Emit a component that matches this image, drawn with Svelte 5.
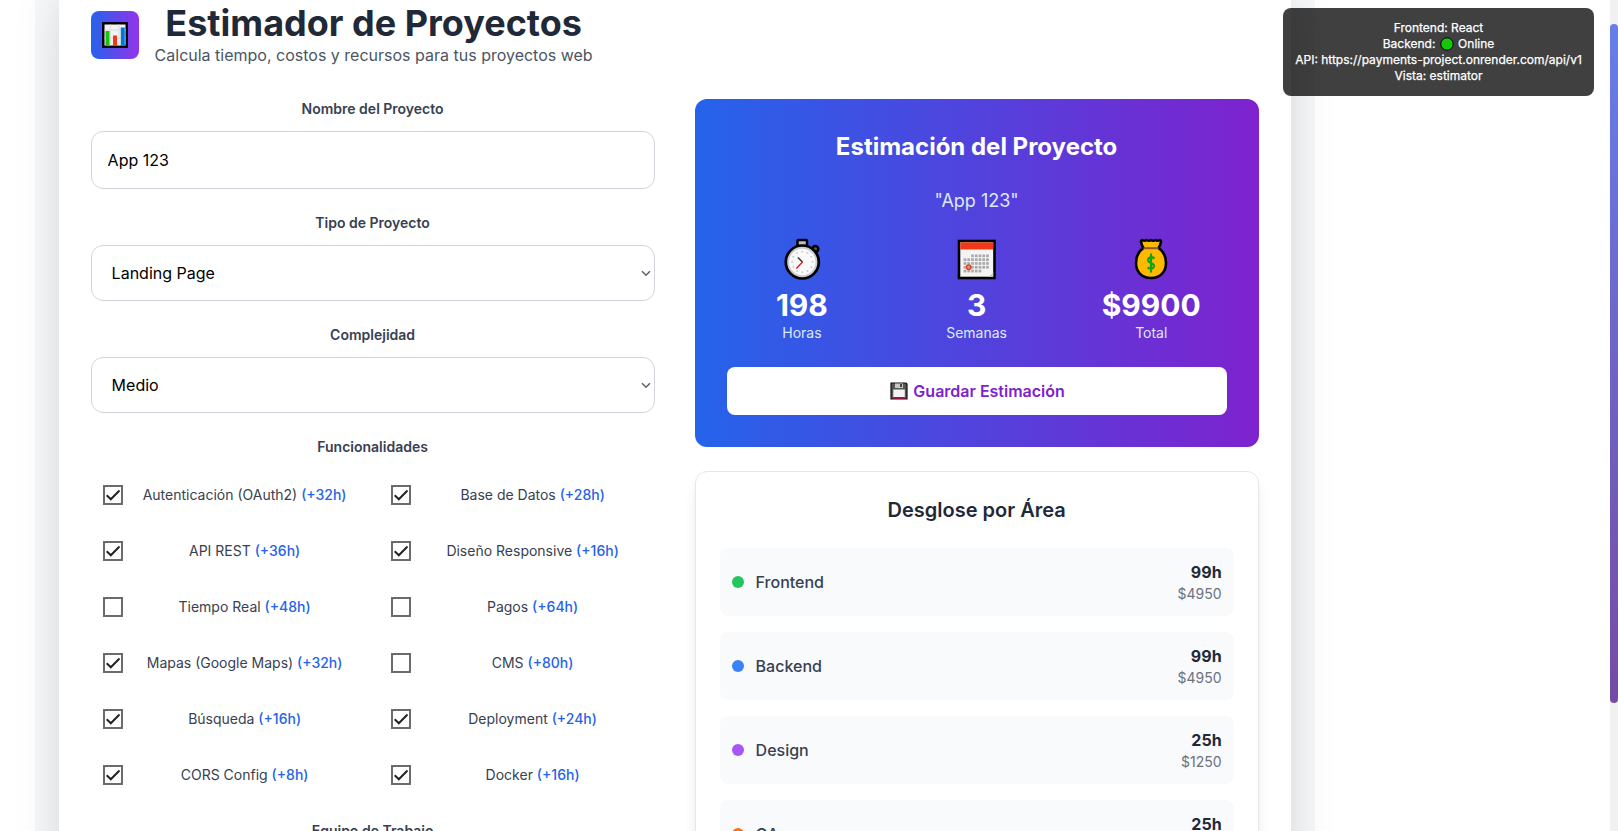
<script>
  const features = [
    ['Autenticación (OAuth2)', 32, true], ['Base de Datos', 28, true],
    ['API REST', 36, true], ['Diseño Responsive', 16, true],
    ['Tiempo Real', 48, false], ['Pagos', 64, false],
    ['Mapas (Google Maps)', 32, true], ['CMS', 80, false],
    ['Búsqueda', 16, true], ['Deployment', 24, true],
    ['CORS Config', 8, true], ['Docker', 16, true]
  ];
  const areas = [
    ['Frontend', '99h', '$4950', '#22c55e'],
    ['Backend', '99h', '$4950', '#3b82f6'],
    ['Design', '25h', '$1250', '#a855f7'],
    ['QA', '25h', '$1250', '#f97316']
  ];
  const dates = [];
  for (let r = 0; r < 5; r++)
    for (let c = 0; c < 7; c++)
      if (!(r === 0 && c < 2) && !(r === 4 && c > 4)) dates.push([6.6 + c * 3.75, 15 + r * 3.8]);
  const ticks = Array.from({ length: 12 }, (_, i) => [
    18 + 10.3 * Math.sin((i * Math.PI) / 6),
    23.5 - 10.3 * Math.cos((i * Math.PI) / 6)
  ]);
</script>

<div class="viewport">
  <div class="stage">
    <main class="sheet">
      <header>
        <div class="logo">
          <svg width="26" height="26" viewBox="0 0 26 26">
            <rect x="1.3" y="1.3" width="23.4" height="23.4" fill="#f3f3f3" stroke="#000" stroke-width="2.4" />
            <path d="M2.500 8H23.500M2.500 16H23.500M8.500 2.500V23.500M17 2.500V23.500" stroke="#dcdcdc" fill="none" />
            <rect x="3.500" y="9" width="4" height="14.500" fill="#16c60c" />
            <rect x="11" y="13.500" width="4" height="10" fill="#f03a17" />
            <rect x="18.800" y="5.500" width="4" height="18" fill="#0078d7" />
          </svg>
        </div>
        <div class="heading">
          <h1>Estimador de Proyectos</h1>
          <p>Calcula tiempo, costos y recursos para tus proyectos web</p>
        </div>
      </header>

      <div class="columns">
        <form>
          <div class="field">
            <label for="name">Nombre del Proyecto</label>
            <input id="name" class="control" value="App 123" />
          </div>
          {#each [['Tipo de Proyecto', 'Landing Page'], ['Complejidad', 'Medio']] as [label, value]}
            <div class="field">
              <span class="label">{label}</span>
              <div class="control select">
                <span>{value}</span>
                <svg width="10" height="7" viewBox="0 0 10 7"><path d="M1 1.200L5 5.200L9 1.200" fill="none" stroke="#666" stroke-width="1.600" /></svg>
              </div>
            </div>
          {/each}
          <div class="field">
            <span class="label">Funcionalidades</span>
            <div class="features">
              {#each features as [name, hours, on]}
                <div class="feature">
                  <svg class="box" width="20" height="20" viewBox="0 0 20 20">
                    <rect x="1" y="1" width="18" height="18" fill="#fff" stroke="#6b6b6b" stroke-width="2" />
                    {#if on}<path d="M3.700 10.300L7.800 14.300L16.500 5.500" fill="none" stroke="#222" stroke-width="2" />{/if}
                  </svg>
                  <span class="name">{name} <b>(+{hours}h)</b></span>
                </div>
              {/each}
            </div>
          </div>
          <div class="field"><span class="label">Equipo de Trabajo</span></div>
        </form>

        <div class="results">
          <section class="summary">
            <h2>Estimación del Proyecto</h2>
            <p class="project">"App 123"</p>
            <div class="stats">
              <div class="stat">
                <svg width="38" height="42" viewBox="-.8 0 38 42">
                  <circle cx="31.500" cy="11" r="3" fill="#555" stroke="#000" stroke-width="2.500" />
                  <path d="M27 15L30 12" stroke="#000" stroke-width="4" />
                  <rect x="13.700" y="2" width="9.500" height="7" rx="1" fill="#bdbdbd" stroke="#000" stroke-width="2.500" />
                  <circle cx="18.500" cy="24" r="16.500" fill="#ccc" stroke="#000" stroke-width="2.700" />
                  <circle cx="18.500" cy="24" r="13.200" fill="#fafafa" />
                  <g transform="translate(.5 .5)">
                    {#each ticks as [x, y]}<circle cx={x} cy={y} r="1" fill="#ccc" />{/each}
                  </g>
                  <path d="M14 19.500L18.700 24" stroke="#333" stroke-width="1.500" />
                  <path d="M18.700 24L12.500 30.500" stroke="#e81224" stroke-width="1.300" />
                </svg>
                <strong>198</strong><span>Horas</span>
              </div>
              <div class="stat">
                <svg width="40" height="42" viewBox="0 0 40 42">
                  <rect x="2" y="3" width="35.500" height="37" fill="#f4f4f4" stroke="#000" stroke-width="2.600" />
                  <rect x="3.300" y="4.300" width="33" height="7.200" fill="#f03a17" />
                  {#each dates as [x, y]}<rect x={x} y={y + 1.5} width="2.700" height="2.700" fill="#a9a9a9" />{/each}
                  <circle cx="11.700" cy="29.200" r="2.100" fill="none" stroke="#f03a17" stroke-width="1.500" />
                  <path d="M32 38.700L36.200 34.500V38.700Z" fill="#ccc" />
                </svg>
                <strong>3</strong><span>Semanas</span>
              </div>
              <div class="stat">
                <svg width="34" height="42" viewBox="0 0 34 42">
                  <path d="M9.500 10C7 6 6 2 8.500 2Q10.500 3.500 12.500 2Q15 3.500 17 2Q19 3.500 21.500 2Q23.500 3.500 25.500 2C28 2 27 6 24.500 10C29 13 32 19 32 25C32 34 26 40 17 40S2 34 2 25C2 19 5 13 9.500 10Z" fill="#ffb900" stroke="#000" stroke-width="2.600" stroke-linejoin="round" />
                  <path d="M9.500 10.200H24.500" stroke="#8e562e" stroke-width="2" />
                  <path d="M20.500 20.500Q17 18 14.500 20.500Q13 23.500 17 25T19.500 29.500Q17 32 13.500 29.500M17 15.500V34.500" fill="none" stroke="#10a31a" stroke-width="2.200" />
                </svg>
                <strong>$9900</strong><span>Total</span>
              </div>
            </div>
            <button type="button">
              <svg width="18" height="18" viewBox="0 0 18 18">
                <path d="M1 1H16L17 2V17H1Z" fill="#555" stroke="#111" stroke-width="1.200" />
                <rect x="5" y="1.500" width="8" height="4.500" fill="#c8c8c8" />
                <rect x="10" y="2" width="2" height="3" fill="#444" />
                <rect x="3.300" y="7.500" width="11.500" height="8" fill="#f2f2f2" />
                <rect x="3.300" y="15" width="11.500" height="1.700" fill="#c30052" />
              </svg>
              Guardar Estimación
            </button>
          </section>

          <section class="breakdown">
            <h3>Desglose por Área</h3>
            {#each areas as [name, hours, cost, color]}
              <div class="area">
                <i style:background={color}></i>
                <span class="area-name">{name}</span>
                <div class="amount"><strong>{hours}</strong><small>{cost}</small></div>
              </div>
            {/each}
          </section>
        </div>
      </div>
    </main>
  </div>

  <aside>
    <div>Frontend: React</div>
    <div>Backend: <svg width="16" height="14" viewBox="0 0 16 14"><circle cx="8" cy="7" r="6.200" fill="#16c60c" stroke="#000" /></svg> Online</div>
    <div>API: https://payments-project.onrender.com/api/v1</div>
    <div>Vista: estimator</div>
  </aside>
  <div class="scrollbar"><div class="thumb"></div></div>
</div>

<style>
  * { box-sizing: border-box; margin: 0; }
  :global(body) { overflow: hidden; }
  .viewport {
    position: relative; height: 831px; overflow: hidden; background: #fff;
    font: 16px/24px Inter, sans-serif; color: #1f2937; text-align: center;
  }
  .stage { width: 1280px; height: 1100px; margin-left: 34.6px; padding: 0 24px; margin-top: -40px; background: #f7f8fa; }
  .sheet { height: 1100px; padding: 43px 32px; background: #fff; box-shadow: 0 25px 50px -12px rgba(0, 0, 0, .22); }
  header { display: flex; align-items: center; gap: 16px; margin-bottom: 32px; }
  .logo { width: 48px; height: 48px; border-radius: 8px; background: linear-gradient(90deg, #2563eb, #9333ea); display: flex; align-items: center; justify-content: center; }
  h1 { font-size: 36px; line-height: 40px; font-weight: 700; }
  .heading p { color: #4b5563; }
  .columns { display: grid; grid-template-columns: 1fr 1fr; gap: 40px; }
  form { display: flex; flex-direction: column; gap: 24px; }
  label, .label { display: block; font-size: 14px; line-height: 20px; font-weight: 600; color: #374151; margin-bottom: 12px; }
  .control { display: block; width: 100%; height: 58px; padding: 16px; border: 1px solid #d1d5db; border-radius: 12px; background: #fff; color: #000; font: inherit; }
  .select { height: 56px; padding: 0 3px 0 20px; display: flex; align-items: center; justify-content: space-between; }
  .features { display: grid; grid-template-columns: 1fr 1fr; gap: 12px; margin-top: 16px; }
  .feature { display: flex; align-items: center; gap: 12px; padding: 12px; height: 44px; }
  .box { flex: none; }
  .name { flex: 1; font-size: 14px; line-height: 20px; color: #374151; white-space: nowrap; }
  .name b { font-weight: 500; color: #2563eb; }
  .summary { height: 348px; padding: 32px; border-radius: 12px; background: linear-gradient(90deg, #2563eb, #7e22ce); color: #fff; margin-bottom: 24px; }
  h2 { font-size: 24px; line-height: 32px; font-weight: 700; margin-bottom: 24px; }
  .project { font-size: 18px; line-height: 28px; color: #dbeafe; margin-bottom: 24px; }
  .stats { display: grid; grid-template-columns: repeat(3, 1fr); gap: 24px; margin-bottom: 24px; }
  .stat { display: flex; flex-direction: column; align-items: center; }
  .stat svg { margin: -1px 0 7px; }
  .stat strong { font-size: 30px; line-height: 36px; font-weight: 700; }
  .stat span { font-size: 14px; line-height: 20px; color: #dbeafe; }
  button { width: 100%; height: 48px; padding: 0 0 0 2px; border: 0; border-radius: 8px; background: #fff; color: #7e22ce; font: 600 16px/24px Inter, sans-serif; display: flex; align-items: center; justify-content: center; gap: 5px; }
  .breakdown { height: 460px; padding: 24px; border: 1px solid #e5e7eb; border-radius: 12px; box-shadow: 0 10px 15px -3px rgba(0, 0, 0, .1), 0 4px 6px -4px rgba(0, 0, 0, .1); }
  h3 { font-size: 20px; line-height: 28px; font-weight: 600; margin-bottom: 24px; }
  .area { display: flex; align-items: center; gap: 12px; padding: 12px; margin-bottom: 16px; border-radius: 8px; background: #f9fafb; }
  .area i { width: 12px; height: 12px; border-radius: 50%; }
  .area-name { font-weight: 500; color: #374151; }
  .amount { margin-left: auto; text-align: right; }
  .amount strong { display: block; font-weight: 700; }
  .amount small { display: block; font-size: 14px; line-height: 20px; color: #6b7280; }
  aside { position: absolute; top: 8px; left: 1283px; width: 311px; height: 88px; padding: 12px; border-radius: 8px; background: rgba(0, 0, 0, .75); color: #fff; font-size: 12px; line-height: 16px; white-space: nowrap; -webkit-text-stroke: .25px #fff; }
  aside svg { vertical-align: -3px; }
  .scrollbar { position: absolute; top: 0; right: 0; width: 8px; height: 831px; background: #f1f1f1; }
  .thumb { height: 679px; margin-top: 24px; border-radius: 4px; background: linear-gradient(180deg, #667eea, #764ba2); }
</style>
